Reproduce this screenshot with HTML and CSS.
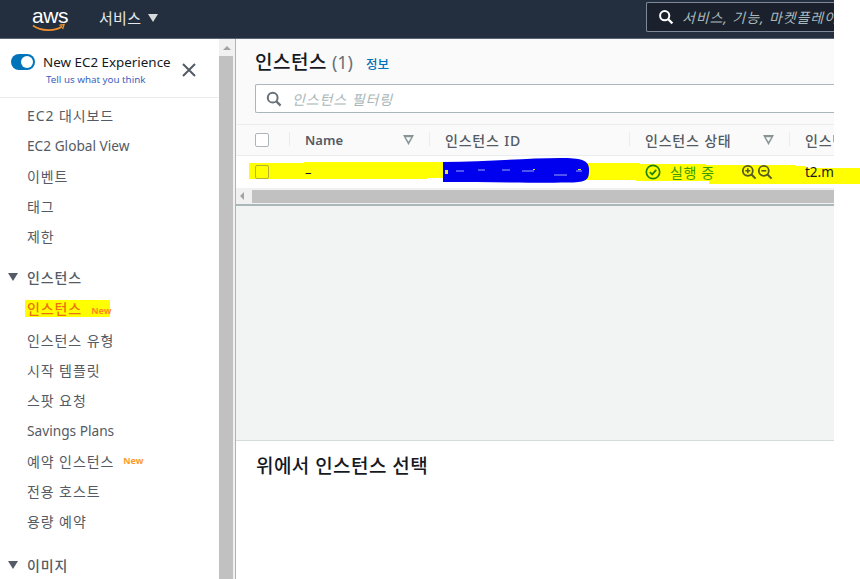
FILE: index.html
```html
<!DOCTYPE html>
<html lang="ko">
<head>
<meta charset="utf-8">
<title>인스턴스</title>
<link rel="stylesheet" href="styles.css">
</head>
<body>
<div class="app">
  <header class="topbar">
    <div class="logo">
      <span class="logo-text">aws</span>
      <svg class="logo-smile" width="34" height="10" viewBox="0 0 34 10"><path d="M1 2.5C9 8.5 23 8.5 30 3.5" fill="none" stroke="#ec912d" stroke-width="1.6"/><path d="M27.5 2.2L32 1.6L30.6 6" fill="none" stroke="#ec912d" stroke-width="1.4"/></svg>
    </div>
    <div class="services">서비스 <span class="caret"></span></div>
    <div class="global-search">
      <svg width="16" height="16" viewBox="0 0 16 16"><circle cx="6.7" cy="6.7" r="4.6" fill="none" stroke="#fff" stroke-width="2"/><path d="M10.2 10.2L14.4 14.4" stroke="#fff" stroke-width="2.2"/></svg>
      <span class="global-ph">서비스, 기능, 마켓플레이스 제품 및 문서 검색</span>
    </div>
  </header>
  <div class="body">
    <aside class="sidebar">
      <div class="experience">
        <span class="toggle"><span class="knob"></span></span>
        <div class="exp-text">
          <div class="exp-title">New EC2 Experience</div>
          <div class="exp-link">Tell us what you think</div>
        </div>
        <svg class="exp-close" width="16" height="16" viewBox="0 0 16 16"><path d="M2 2L14 14M14 2L2 14" stroke="#545b64" stroke-width="2"/></svg>
      </div>
      <nav class="nav">
        <a class="item">EC2 대시보드</a>
        <a class="item latin">EC2 Global View</a>
        <a class="item">이벤트</a>
        <a class="item">태그</a>
        <a class="item">제한</a>
        <div class="group"><span class="group-caret"></span>인스턴스</div>
        <a class="item active"><span class="active-text">인스턴스<span class="new new-active">New</span></span></a>
        <a class="item">인스턴스 유형</a>
        <a class="item">시작 템플릿</a>
        <a class="item">스팟 요청</a>
        <a class="item latin">Savings Plans</a>
        <a class="item">예약 인스턴스<span class="new">New</span></a>
        <a class="item">전용 호스트</a>
        <a class="item">용량 예약</a>
        <div class="group group-last"><span class="group-caret"></span>이미지</div>
      </nav>
    </aside>
    <div class="side-scroll">
      <span class="arrow-up"></span>
      <span class="side-thumb"></span>
    </div>
    <main class="main">
      <section class="panel-top">
        <div class="title-row">
          <h1 class="title">인스턴스</h1>
          <span class="count">(1)</span>
          <a class="info">정보</a>
        </div>
        <div class="filter">
          <svg width="16" height="16" viewBox="0 0 16 16"><circle cx="6.7" cy="6.7" r="4.9" fill="none" stroke="#687078" stroke-width="2"/><path d="M10.4 10.4L14.6 14.6" stroke="#687078" stroke-width="2.2"/></svg>
          <span class="filter-ph">인스턴스 필터링</span>
        </div>
      </section>
      <div class="table">
        <div class="thead">
          <span class="cell c-check"><span class="check"></span></span>
          <span class="cell c-name"><b>Name</b><span class="sort"></span></span>
          <span class="cell c-id"><b class="kr">인스턴스 ID</b></span>
          <span class="cell c-state"><b class="kr">인스턴스 상태</b><span class="sort"></span></span>
          <span class="cell c-type"><b class="kr">인스턴스 유형</b></span>
        </div>
        <div class="trow">
          <svg class="marker" width="624" height="30" viewBox="0 0 624 30" aria-hidden="true">
            <path d="M13 7H68V6H210V22H191V23H13ZM350 7H404V8H470V9H560V10H570V12H624V28H473V25H400V24H350Z" fill="#ffff00"/>
            <path d="M207 6C250 6 290 2 325 2C345 2 354 4 353 15C353 24 350 26 335 26.500C300 27 250 26 207 26Z" fill="#0000ee"/>
            <path d="M220 15H228M242 14H249M266 14H274M286 15H298M318 19H331M340 15H346" stroke="#9ea6f5" stroke-width="1"/>
            <path d="M209 14H212V18H209ZM297 13H299V14H297ZM342 13H345V14H342Z" fill="#e0e040"/>
          </svg>
          <span class="cell c-check"><span class="check check-marked"></span></span>
          <span class="cell c-name dash">–</span>
          <span class="cell c-id"></span>
          <span class="cell c-state state-ok">
            <svg width="16" height="16" viewBox="0 0 16 16"><circle cx="8" cy="8" r="6.7" fill="none" stroke="#1d8102" stroke-width="1.7"/><path d="M4.8 8.2L7.2 10.4L11.2 5.8" fill="none" stroke="#1d8102" stroke-width="1.8"/></svg>
            <span class="state-text">실행 중</span>
            <span class="zooms">
              <svg width="16" height="16" viewBox="0 0 16 16"><circle cx="6.8" cy="6.8" r="5" fill="none" stroke="#545b20" stroke-width="1.8"/><path d="M10.5 10.5L14.6 14.6" stroke="#545b20" stroke-width="2"/><path d="M4.3 6.8H9.3M6.8 4.3V9.3" stroke="#545b20" stroke-width="1.6"/></svg>
              <svg width="16" height="16" viewBox="0 0 16 16"><circle cx="6.8" cy="6.8" r="5" fill="none" stroke="#545b20" stroke-width="1.8"/><path d="M10.5 10.5L14.6 14.6" stroke="#545b20" stroke-width="2"/><path d="M4.3 6.8H9.3" stroke="#545b20" stroke-width="1.6"/></svg>
            </span>
          </span>
          <span class="cell c-type type-val">t2.micro</span>
        </div>
        <div class="hscroll">
          <span class="arrow-left"></span>
          <span class="h-thumb"></span>
        </div>
      </div>
      <div class="gap-area"></div>
      <section class="detail">
        <h2 class="detail-title">위에서 인스턴스 선택</h2>
      </section>
    </main>
  </div>
</div>
</body>
</html>
```
FILE: styles.css
```css
* { box-sizing: border-box; }
html, body { margin: 0; padding: 0; background: #fff; }
body {
  font-family: "Noto Sans", "Noto Sans CJK KR", sans-serif;
  color: #545b64;
  overflow: hidden;
  height: 579px;
}
.app { width: 834px; height: 579px; display: flex; flex-direction: column; }

.topbar {
  height: 39px;
  flex: none;
  background: #232f3e;
  border-bottom: 1px solid #5b6470;
  display: flex;
  align-items: center;
  position: relative;
  padding-left: 32px;
}
.logo { width: 67px; height: 30px; position: relative; flex: none; }
.logo-text {
  display: block;
  font-family: "Liberation Sans", sans-serif;
  font-size: 21px;
  line-height: 21px;
  letter-spacing: -0.4px;
  color: #fff;
  margin-top: 1px;
}
.logo-smile { position: absolute; left: 0; top: 19px; }
.services { color: #e6e8ea; font-size: 15px; letter-spacing: 0.3px; line-height: 20px; display: flex; align-items: center; gap: 7px; margin-top: -3px; }
.caret { width: 0; height: 0; border-left: 5.5px solid transparent; border-right: 5.5px solid transparent; border-top: 8px solid #d5dbdb; display: block; }
.global-search {
  margin-left: auto;
  width: 188px;
  height: 30px;
  background: #1a212d;
  border: 1px solid #7d8998;
  border-right: 0;
  border-radius: 2px 0 0 2px;
  display: flex;
  align-items: center;
  padding-left: 11px;
  gap: 8px;
  overflow: hidden;
  white-space: nowrap;
  margin-top: -4px;
}
.global-search svg { flex: none; }
.global-ph { font-size: 14px; font-style: italic; color: #aab7b8; letter-spacing: 0.9px; }

.body { flex: 1; display: flex; min-height: 0; }
.sidebar { width: 219px; flex: none; background: #fff; overflow: hidden; }
.experience {
  height: 59px;
  border-bottom: 1px solid #eaeded;
  display: flex;
  position: relative;
  padding: 15px 0 0 11px;
}
.toggle { width: 24px; height: 16px; border-radius: 8px; background: #0073bb; display: block; position: relative; flex: none; }
.knob { position: absolute; right: 2px; top: 2px; width: 12px; height: 12px; background: #fff; border-radius: 50%; }
.exp-text { margin-left: 8px; }
.exp-title { font-size: 13.4px; line-height: 16px; color: #16191f; white-space: nowrap; }
.exp-link { font-size: 9.8px; line-height: 13px; margin-top: 3px; margin-left: 3px; color: #3b5fc0; white-space: nowrap; }
.exp-close { position: absolute; left: 181px; top: 23px; }

.nav { display: flex; flex-direction: column; padding-top: 2px; }
.item { height: 30.3px; display: flex; align-items: center; padding-left: 27px; font-size: 14px; letter-spacing: 0.9px; color: #545b64; white-space: nowrap; }
.item.latin { font-size: 13.7px; letter-spacing: 0; }
.group { height: 30px; margin-top: 11px; display: flex; align-items: center; padding-left: 8px; font-size: 14px; font-weight: 500; letter-spacing: 0.9px; color: #545b64; white-space: nowrap; }
.group-last { margin-top: 13px; }
.group-caret { width: 0; height: 0; border-left: 5px solid transparent; border-right: 5px solid transparent; border-top: 8px solid #545b64; margin-right: 9px; display: block; }
.item.active { color: #ec7211; height: 32px; }
.active-text { background: #ffff00; height: 17px; line-height: 17px; width: 85px; margin-left: -2px; padding-left: 2px; display: block; font-weight: 500; white-space: nowrap; }
.new { font-size: 9px; font-weight: 700; color: #ff9a2e; margin-left: 9px; letter-spacing: 0; }
.new-active { color: #ff8a1e; }

.side-scroll { width: 16px; flex: none; background: #f1f1f1; position: relative; padding-top: 4px; display: flex; flex-direction: column; align-items: center; }
.arrow-up { display: block; width: 0; height: 0; border-left: 4px solid transparent; border-right: 4px solid transparent; border-bottom: 4px solid #a3a3a3; margin-top: 3px; margin-left: -1px; }
.side-thumb { display: block; width: 14px; flex: 1; background: #c1c1c1; margin-top: 6px; margin-left: -2px; }

.main { flex: 1; min-width: 0; display: flex; flex-direction: column; border-left: 1px solid #aab7b8; background: #f2f3f3; }
.panel-top { height: 85px; background: #fafafa; padding: 10px 0 0 19px; flex: none; }
.title-row { display: flex; align-items: baseline; height: 28px; }
.title { margin: 0; font-size: 19px; letter-spacing: 0.5px; font-weight: 500; line-height: 26px; color: #16191f; }
.count { font-size: 18px; color: #687078; margin-left: 5px; }
.info { font-size: 12.500px; font-weight: 500; color: #0073bb; margin-left: 13px; }
.filter {
  height: 29px;
  margin-top: 7px;
  background: #fff;
  border: 1px solid #aab7b8;
  border-right: 0;
  border-radius: 2px 0 0 2px;
  display: flex;
  align-items: center;
  padding-left: 10px;
  gap: 10px;
}
.filter-ph { font-size: 14px; letter-spacing: 0.9px; font-style: italic; color: #aab7b8; }

.table { flex: none; background: #fff; }
.thead {
  height: 32px;
  padding-bottom: 1px;
  background: #fafafa;
  border-top: 1px solid #eaeded;
  border-bottom: 1px solid #eaeded;
  display: flex;
  align-items: center;
}
.cell { display: flex; align-items: center; flex: none; position: relative; height: 100%; white-space: nowrap; overflow: hidden; }
.c-check { width: 53px; padding-left: 19px; }
.c-name { width: 140px; padding-left: 16px; }
.c-id { width: 200px; padding-left: 16px; }
.c-state { width: 160px; padding-left: 16px; }
.c-type { flex: 1; min-width: 0; padding-left: 16px; }
.thead .cell b { font-size: 13px; font-weight: 600; color: #545b64; }
.thead .cell b.kr { font-size: 14px; font-weight: 500; letter-spacing: 0.8px; }
.thead .cell + .cell::before { content: ""; position: absolute; left: 0; top: 7px; bottom: 8px; width: 1px; background: #eaeded; }
.check { display: block; width: 14px; height: 14px; border: 1px solid #aab7b8; border-radius: 2px; background: #fff; position: relative; }
.check-marked { background: transparent; border-color: #b4b428; }
.sort { position: absolute; right: 15px; top: 10px; width: 11px; height: 10px; background: #879596; clip-path: polygon(0 0, 100% 0, 50% 100%, 0 0, 25% 22%, 50% 68%, 75% 22%, 25% 22%); }

.trow { height: 32px; display: flex; align-items: center; background: #fff; position: relative; }
.marker { position: absolute; left: 0; top: 0; }
.dash { font-size: 13px; color: #16191f; }
.state-ok { color: #1d8102; font-size: 14px; gap: 9px; }
.state-text { letter-spacing: 0.6px; width: 60px; color: #3b9a02; }
.zooms { display: flex; margin-left: 2px; }
.type-val { font-size: 13.500px; color: #16191f; }

.hscroll { height: 16px; background: #f1f1f1; display: flex; align-items: center; padding-left: 4px; position: relative; }
.arrow-left { display: block; width: 0; height: 0; border-top: 4px solid transparent; border-bottom: 4px solid transparent; border-right: 4px solid #a3a3a3; }
.h-thumb { display: block; flex: 1; height: 13px; margin-left: 8px; background: #c1c1c1; }

.gap-area { height: 236px; flex: none; background: #f2f3f3; border-top: 2px solid #aab7b8; }
.detail { flex: 1; background: #fff; border-top: 1px solid #d5dbdb; padding: 12px 0 0 20px; }
.detail-title { margin: 0; font-size: 19px; letter-spacing: 0.45px; font-weight: 500; line-height: 26px; color: #16191f; }
```
